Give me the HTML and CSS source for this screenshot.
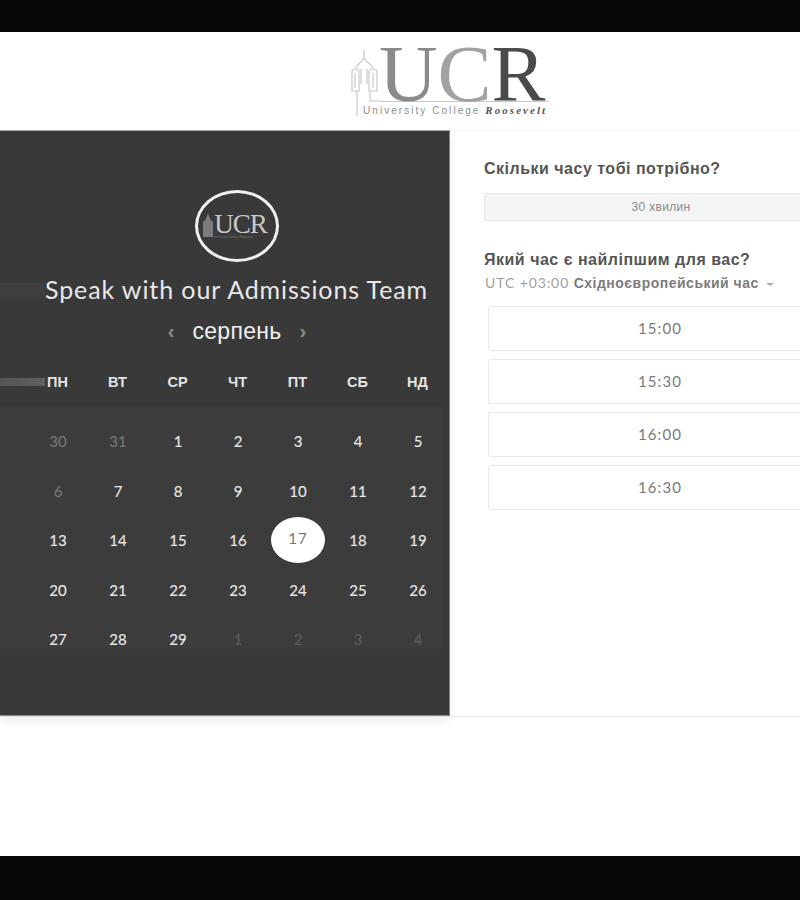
FILE: index.html
```html
<!DOCTYPE html>
<html lang="uk">
<head>
    <meta charset="UTF-8">
    <title>Speak with our Admissions Team</title>
    <link rel="stylesheet" href="styles.css">
</head>
<body>
    <div class="bar"></div>
    <header class="header">
        <div class="logo">
            <svg class="tower" width="30" height="68" viewBox="0 0 30 68" fill="none" stroke="#c8c8c8" stroke-width="1.2">
                <path d="M14 0V9M14 8C12 12 8 13 6 18M14 8C16 12 20 13 23 18"/>
                <path d="M2 22C2 18 9 18 9 22V41H2ZM19 22C19 18 27 18 27 22V41H19Z"/>
                <path d="M5 23V38M23 23V38M11 19V34M17 19V34M7 41V66M20 41V51H30"/>
            </svg>
            <div class="logo-text">
                <div class="logo-mark"><span class="u">U</span><span class="c">C</span><span class="r">R</span></div>
                <div class="logo-sub">University College <em>Roosevelt</em></div>
            </div>
        </div>
    </header>
    <main class="panel">
        <section class="calendar">
            <div class="badge">
                <svg width="10" height="24" viewBox="0 0 10 24" fill="#7c7c7c"><path d="M5 0L8 8H10V24H0V8H2Z"/></svg>
                <div class="badge-text">
                    <div class="badge-mark">UCR</div>
                    <div class="badge-sub">University College Roosevelt</div>
                </div>
            </div>
            <h1 class="title">Speak with our Admissions Team</h1>
            <div class="month">
                <span class="arrow">&#8249;</span>
                <span class="month-name">серпень</span>
                <span class="arrow">&#8250;</span>
            </div>
            <div class="week">
                <i class="streak"></i>
                <span>ПН</span><span>ВТ</span><span>СР</span><span>ЧТ</span><span>ПТ</span><span>СБ</span><span>НД</span>
            </div>
            <div class="days">
                <span class="off">30</span><span class="off">31</span><span>1</span><span>2</span><span>3</span><span>4</span><span>5</span>
                <span class="off">6</span><span>7</span><span>8</span><span>9</span><span>10</span><span>11</span><span>12</span>
                <span>13</span><span>14</span><span>15</span><span>16</span><span class="today"><b>17</b></span><span>18</span><span>19</span>
                <span>20</span><span>21</span><span>22</span><span>23</span><span>24</span><span>25</span><span>26</span>
                <span>27</span><span>28</span><span>29</span><span class="off dim">1</span><span class="off dim">2</span><span class="off dim">3</span><span class="off dim">4</span>
            </div>
        </section>
        <section class="times">
            <h2 class="label">Скільки часу тобі потрібно?</h2>
            <div class="duration">30 хвилин</div>
            <h2 class="label label-time">Який час є найліпшим для вас?</h2>
            <div class="zone">UTC +03:00 <strong>Східноєвропейський час</strong><i class="caret"></i></div>
            <ul class="slots">
                <li>15:00</li>
                <li>15:30</li>
                <li>16:00</li>
                <li>16:30</li>
            </ul>
        </section>
    </main>
    <div class="blank"></div>
    <div class="bar bar-bottom"></div>
</body>
</html>
```

FILE: styles.css
```css
*{
    margin: 0;
    padding: 0;
    box-sizing: border-box;
    list-style: none;
}
body{
    width: 800px;
    height: 900px;
    overflow: hidden;
    display: flex;
    flex-direction: column;
    background: #fff;
    font-family: "Liberation Sans", Arial, sans-serif;
}
.bar{
    height: 32px;
    flex: none;
    background: #060606;
}
.bar-bottom{
    height: 44px;
}
.blank{
    flex: 1;
}
.header{
    height: 98px;
    flex: none;
    display: flex;
    justify-content: center;
    padding: 14px 0 0 98px;
}
.logo{
    display: flex;
    align-items: flex-start;
    height: 74px;
}
.tower{
    margin-top: 4px;
    margin-right: -1px;
}
.logo-text{
    width: 169px;
}
.logo-mark{
    font-family: "Liberation Serif", serif;
    font-size: 81px;
    line-height: 56px;
    height: 56px;
    border-bottom: 1px solid #c8c8c8;
    white-space: nowrap;
}
.logo-mark .u{ color: #8b8b8b; }
.logo-mark .c{ color: #a2a2a2; }
.logo-mark .r{ color: #4a4a4a; }
.logo-sub{
    margin: 2px 0 0 -16px;
    font-size: 10px;
    line-height: 13px;
    letter-spacing: 2.05px;
    color: #8e8e8e;
    white-space: nowrap;
}
.logo-sub em{
    font-family: "Liberation Serif", serif;
    font-weight: bold;
    font-size: 11px;
    color: #555;
}
.panel{
    height: 587px;
    flex: none;
    display: flex;
    border-top: 1px solid #f6f6f6;
    border-bottom: 1px solid #ececec;
}
.calendar{
    width: 450px;
    flex: none;
    margin-top: -1px;
    padding-top: 59px;
    display: flex;
    flex-direction: column;
    background: linear-gradient(#3e3e3e, #3e3e3e) 0 152px / 45px 15px no-repeat, #393939;
    border-top: 1px solid #a8a8a8;
    border-right: 1px solid #808080;
    border-bottom: 1px solid #8c8c8c;
    box-shadow: 0 5px 10px rgba(0,0,0,0.07);
    color: #f2f2f2;
}
.badge{
    width: 84px;
    height: 72px;
    margin-left: 195px;
    border: 3px solid #f0f0f0;
    border-radius: 50%;
    display: flex;
    align-items: center;
    justify-content: center;
}
.badge svg{
    margin: -2px 1px 0 -4px;
}
.badge-mark{
    font-family: "Liberation Serif", serif;
    font-size: 27px;
    line-height: 22px;
    letter-spacing: -1px;
    color: #c9c9c9;
}
.badge-sub{
    font-size: 3px;
    white-space: nowrap;
    color: #777;
    line-height: 5px;
}
.title{
    margin-top: 12px;
    font-family: Lato, sans-serif;
    font-weight: 400;
    font-size: 25px;
    line-height: 30px;
    letter-spacing: 0.9px;
    color: #e8e8e8;
    text-align: center;
    width: 473px;
    white-space: nowrap;
}
.month{
    margin-top: 13px;
    width: 474px;
    display: flex;
    justify-content: center;
    align-items: center;
    gap: 18px;
    height: 28px;
}
.month-name{
    font-size: 23px;
    letter-spacing: 0.3px;
    color: #f0f0f0;
}
.arrow{
    font-size: 20px;
    font-weight: bold;
    color: #8c8c8c;
}
.week{
    margin-top: 28px;
    display: grid;
    grid-template-columns: 28px repeat(7, 60px);
    height: 17px;
    align-items: center;
    font-size: 14.5px;
    font-weight: bold;
    color: #e4e4e4;
    text-align: center;
}
.week span{
    margin-left: -1px;
}
.streak{
    width: 45px;
    height: 8px;
    background: linear-gradient(90deg, #555, #5f5f5f);
}
.days{
    margin-top: 17px;
    margin-right: 6px;
    padding: 10px 0 0 28px;
    height: 243px;
    display: grid;
    grid-template-columns: repeat(7, 60px);
    grid-auto-rows: 49.5px;
    background: #3c3c3c;
    font-family: Lato, sans-serif;
    font-size: 15px;
    font-weight: 400;
    -webkit-text-stroke: 0.15px;
    color: #e8e8e8;
    text-align: center;
    line-height: 49px;
}
.days .off{
    color: #777;
}
.days .dim{
    color: #5c5c5c;
}
.today{
    display: flex;
    align-items: center;
    justify-content: center;
}
.today b{
    width: 54px;
    height: 46px;
    margin-top: -2px;
    border-radius: 50%;
    background: #fff;
    color: #777;
    font-weight: 400;
    -webkit-text-stroke: 0;
    line-height: 43px;
    letter-spacing: 1px;
}
.times{
    flex: none;
    width: 400px;
    padding: 29px 0 0 34px;
}
.label{
    font-size: 16px;
    line-height: 18px;
    font-weight: bold;
    letter-spacing: 0.5px;
    color: #555;
}
.duration{
    margin-top: 15px;
    width: 354px;
    height: 28px;
    background: #f5f5f5;
    border: 1px solid #e6e6e6;
    border-radius: 2px;
    font-size: 12px;
    line-height: 26px;
    text-align: center;
    letter-spacing: 0.3px;
    color: #8a8a8a;
}
.label-time{
    margin-top: 30px;
}
.zone{
    margin-top: 5px;
    margin-left: 1px;
    font-family: Lato, "Liberation Sans", sans-serif;
    font-size: 14px;
    line-height: 18px;
    letter-spacing: 0.9px;
    color: #a0a0a0;
    white-space: nowrap;
}
.zone strong{
    font-family: "Liberation Sans", sans-serif;
    font-size: 14px;
    letter-spacing: 0.5px;
    color: #7c7c7c;
}
.caret{
    display: inline-block;
    margin-left: 7px;
    vertical-align: middle;
    border-top: 3px solid #aaa;
    border-left: 4px solid transparent;
    border-right: 4px solid transparent;
}
.slots{
    margin: 14px 0 0 4px;
    width: 344px;
    display: flex;
    flex-direction: column;
    gap: 8px;
}
.slots li{
    height: 45px;
    border: 1px solid #e8e8e8;
    border-radius: 3px;
    font-family: Lato, sans-serif;
    font-size: 15px;
    line-height: 43px;
    letter-spacing: 1.1px;
    text-align: center;
    color: #7a7a7a;
}
```
